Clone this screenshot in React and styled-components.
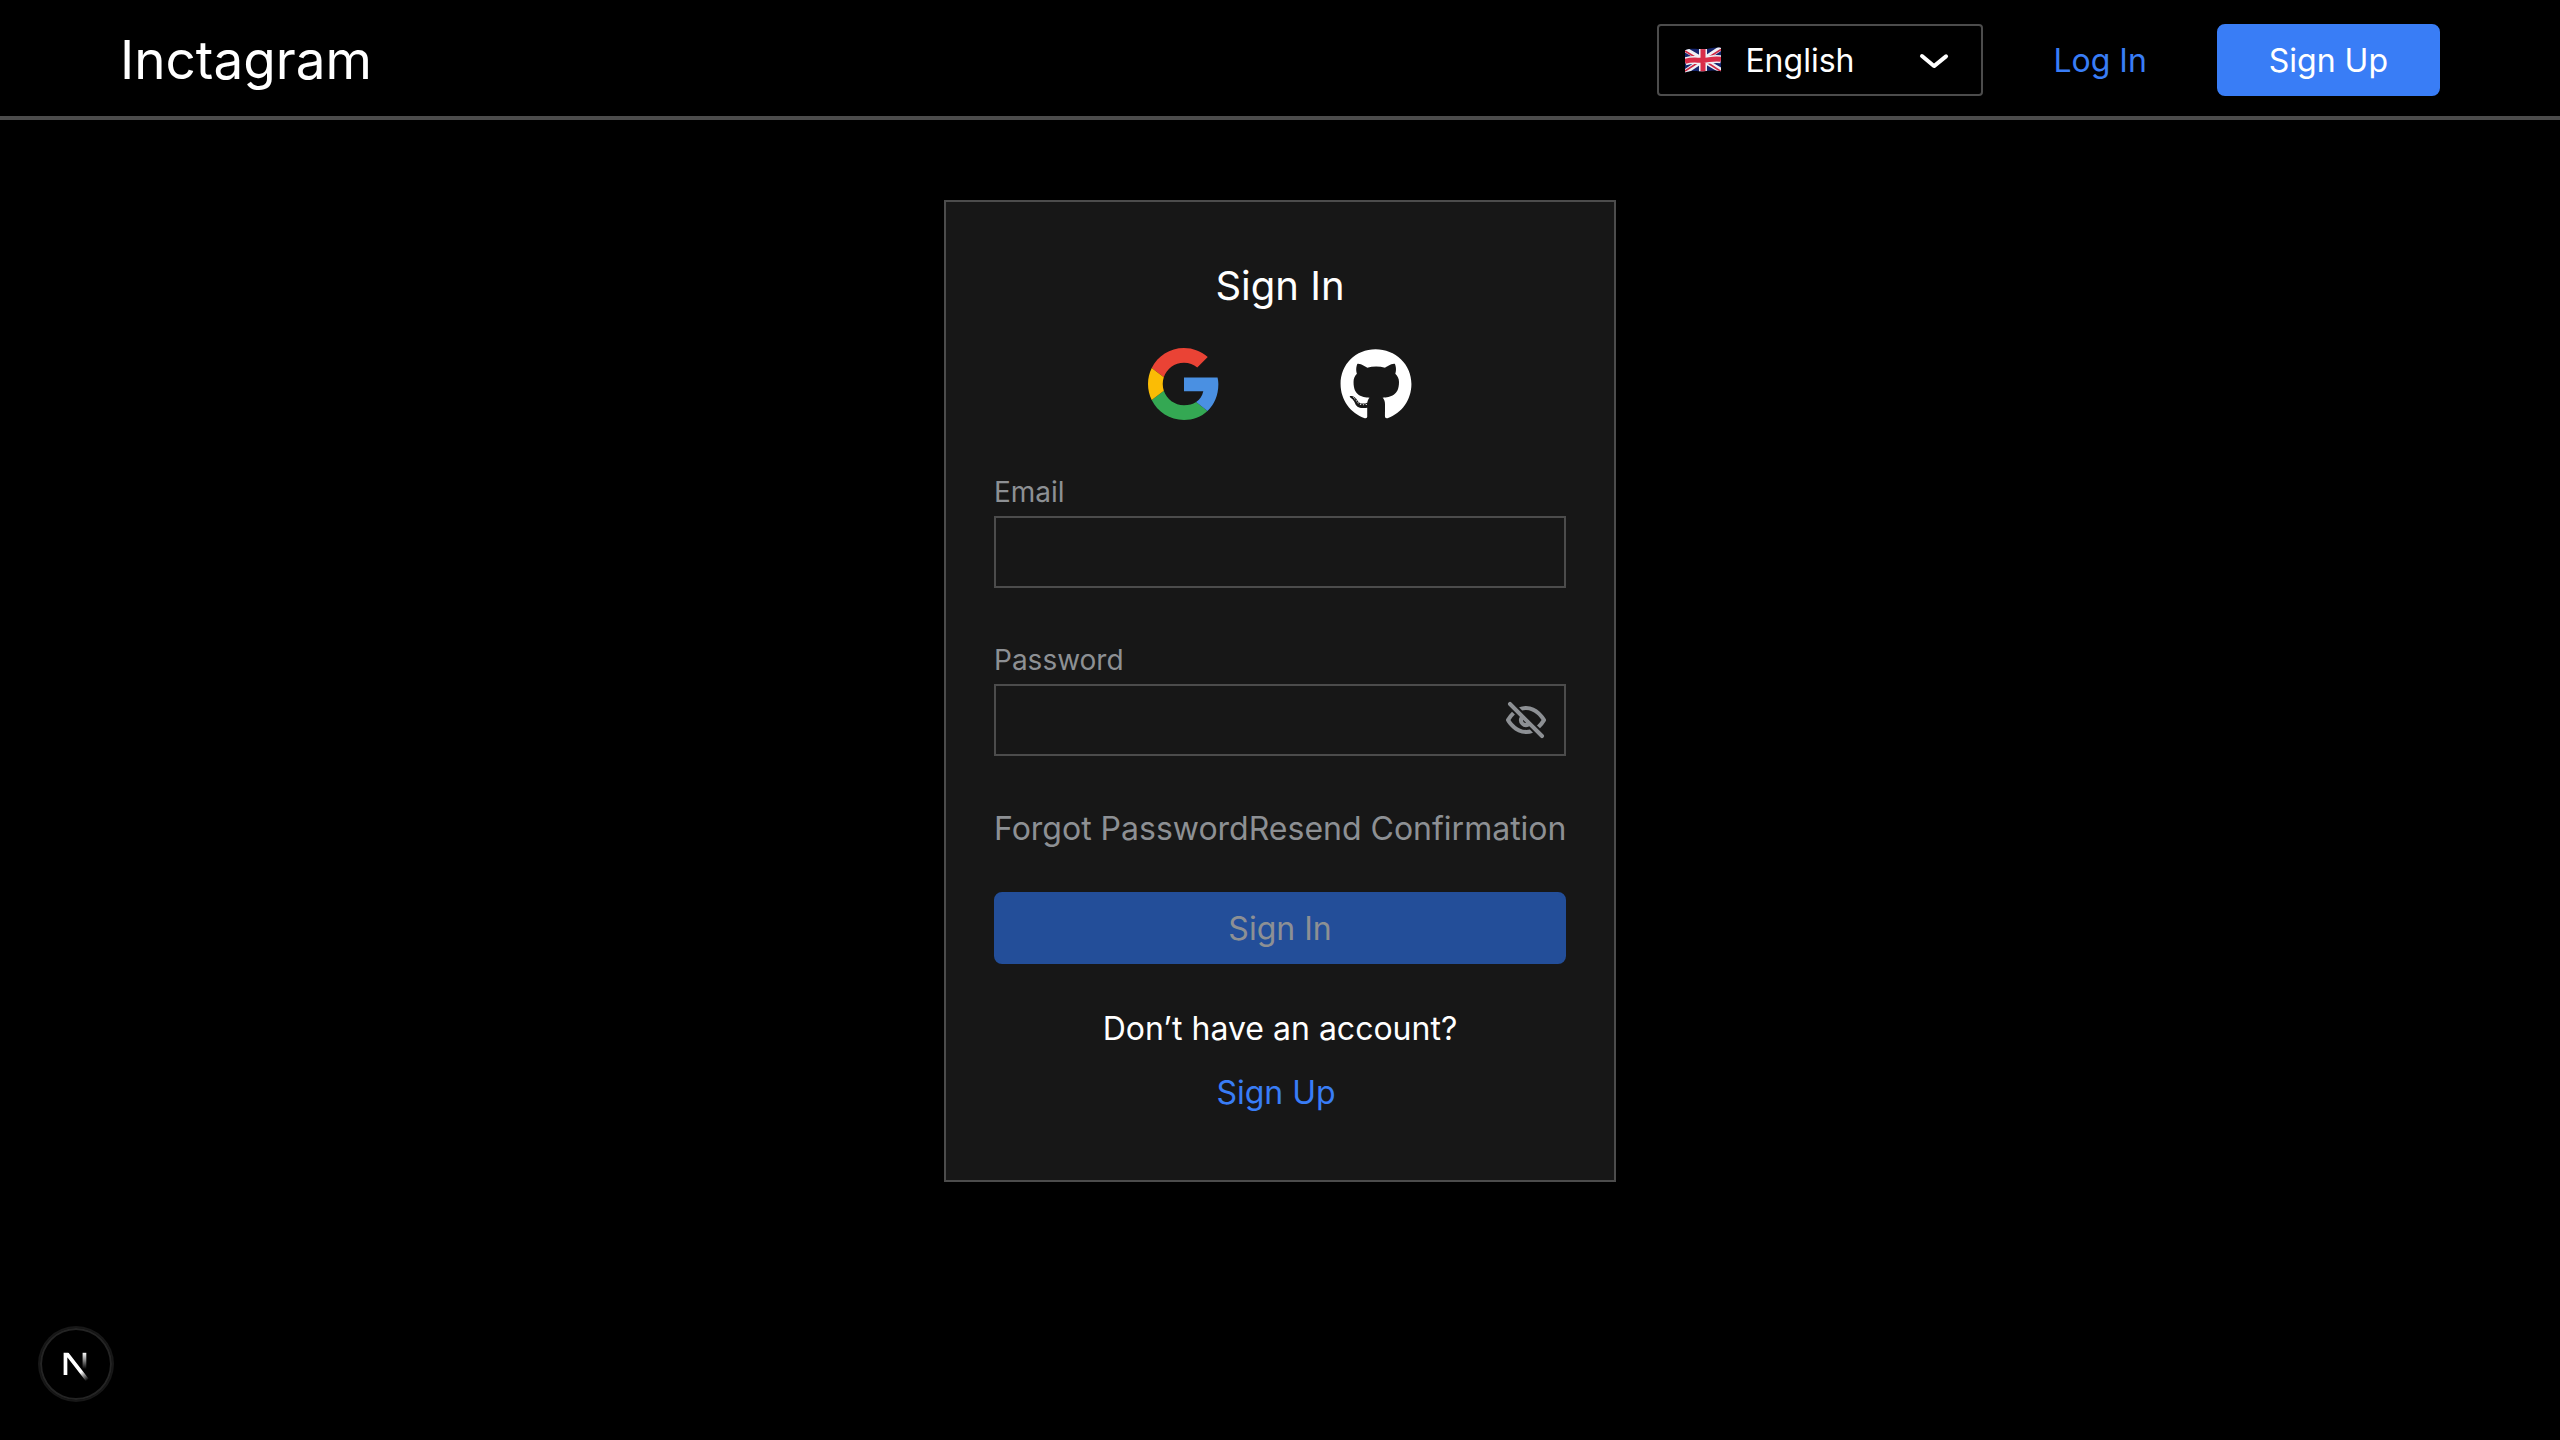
import React, { useState } from "react";
import styled, { createGlobalStyle, css } from "styled-components";
import { FaGithub } from "react-icons/fa";

const color = {
  page: "#000000",
  panel: "#171717",
  line: "#4c4c4c",
  text: "#ffffff",
  muted: "#8d9094",
  primary: "#397df6",
  primaryDisabled: "#234e99",
};

const GlobalStyle = createGlobalStyle`
  *, *::before, *::after { box-sizing: border-box; }
  body {
    margin: 0;
    background: ${color.page};
    color: ${color.text};
    font-family: Inter, "Liberation Sans", sans-serif;
    font-size: 32px;
    line-height: 50px;
  }
`;

const Header = styled.header`
  display: flex;
  align-items: center;
  justify-content: space-between;
  padding: 24px 120px 20px;
  border-bottom: 4px solid ${color.line};
`;

const Brand = styled.a`
  font-size: 53px;
  line-height: 72px;
  color: ${color.text};
  text-decoration: none;
`;

const Actions = styled.nav`
  display: flex;
  align-items: center;
  gap: 18px;
`;

const LanguageBox = styled.div`
  position: relative;
  display: flex;
  align-items: center;
`;

const LanguageSelect = styled.select`
  appearance: none;
  width: 326px;
  height: 72px;
  padding: 2px 72px 0 86px;
  border: 2px solid ${color.line};
  border-radius: 4px;
  background: ${color.page};
  color: ${color.text};
  font: inherit;
`;

const FlagIcon = styled.svg`
  position: absolute;
  left: 28px;
  width: 36px;
  height: 26px;
  pointer-events: none;
`;

const ChevronIcon = styled.svg`
  position: absolute;
  right: 25px;
  width: 48px;
  height: 48px;
  fill: ${color.text};
  pointer-events: none;
`;

const buttonBase = css`
  display: flex;
  align-items: center;
  justify-content: center;
  height: 72px;
  padding: 2px 50px 0;
  border: 2px solid transparent;
  border-radius: 8px;
  font: inherit;
  text-decoration: none;
`;

const LinkButton = styled.a`
  ${buttonBase}
  background: ${(p) => (p.$filled ? color.primary : "transparent")};
  color: ${(p) => (p.$filled ? color.text : color.primary)};
  border-color: ${(p) => (p.$filled ? color.primary : "transparent")};
`;

const SubmitButton = styled.button`
  ${buttonBase}
  width: 100%;
  margin-top: 38px;
  background: ${color.primary};
  color: ${color.text};

  &:disabled {
    background: ${color.primaryDisabled};
    border-color: ${color.primaryDisabled};
    color: ${color.muted};
  }
`;

const Main = styled.main`
  display: flex;
  justify-content: center;
  padding: 80px 24px;
`;

const Card = styled.form`
  display: flex;
  flex-direction: column;
  width: 672px;
  padding: 48px 48px 62px;
  border: 2px solid ${color.line};
  background: ${color.panel};
`;

const Title = styled.h1`
  margin: 0 0 26px;
  font-size: 40px;
  font-weight: 400;
  line-height: 72px;
  text-align: center;
`;

const Providers = styled.div`
  display: flex;
  justify-content: center;
  gap: 120px;
`;

const ProviderButton = styled.button`
  display: flex;
  padding: 0;
  border: 0;
  background: none;
  color: ${color.text};

  svg {
    width: 72px;
    height: 72px;
  }
`;

const Field = styled.div`
  display: flex;
  flex-direction: column;
  margin-top: 48px;
`;

const Label = styled.label`
  font-size: 28px;
  line-height: 48px;
  color: ${color.muted};
`;

const InputBox = styled.div`
  position: relative;
  display: flex;
  align-items: center;
`;

const Input = styled.input`
  width: 100%;
  height: 72px;
  padding: 0 ${(p) => (p.$withToggle ? "72px" : "24px")} 0 24px;
  border: 2px solid ${color.line};
  border-radius: 0;
  background: transparent;
  color: ${color.text};
  font: inherit;
`;

const ToggleButton = styled.button`
  position: absolute;
  right: 16px;
  display: flex;
  padding: 0;
  border: 0;
  background: none;

  svg {
    width: 48px;
    height: 48px;
    fill: ${color.muted};
  }
`;

const HelpLinks = styled.div`
  display: flex;
  justify-content: space-between;
  margin-top: 48px;
  white-space: nowrap;
`;

const HelpLink = styled.a`
  color: ${color.muted};
  text-decoration: none;
`;

const Prompt = styled.p`
  margin: 40px 0 14px;
  text-align: center;
`;

const SignUpRow = styled.div`
  padding-right: 8px;
  text-align: center;
`;

const SignUpLink = styled.a`
  color: ${color.primary};
  text-decoration: none;
`;

const DevBadge = styled.button`
  position: fixed;
  left: 40px;
  bottom: 40px;
  width: 72px;
  height: 72px;
  padding: 0;
  border: 0;
  border-radius: 50%;
  background: #000000;
  box-shadow: 0 0 0 2px #171717, inset 0 0 0 2px #242424;

  svg {
    display: block;
    width: 72px;
    height: 72px;
  }
`;

function UkFlag() {
  return (
    <FlagIcon viewBox="0 0 36 26" aria-hidden="true">
      <defs>
        <clipPath id="flag-cloth">
          <path d="M0 3.2C6 .8 11 2.2 18 2.2S29 -.4 36 .8V24.2C29 22.600 25 24.200 18 24.200S7 23 0 25.500Z" />
        </clipPath>
      </defs>
      <g clipPath="url(#flag-cloth)">
        <rect width="36" height="26" fill="#16266e" />
        <path d="M0 2.500 36 23.500M0 25 36 1" stroke="#f0f0f4" strokeWidth="5" />
        <path d="M0 4 15 13M20 14 36 24.500M0 24 14 15M21 12 36 2.500" stroke="#cf2945" strokeWidth="1.600" />
        <path d="M18 0V26M0 14.500C7 12 12 13.500 18 13.300S29 11 36 12.300" stroke="#f0f0f4" strokeWidth="8" fill="none" />
        <path d="M18 0V26M0 14.500C7 12 12 13.500 18 13.300S29 11 36 12.300" stroke="#d92c48" strokeWidth="5" fill="none" />
      </g>
    </FlagIcon>
  );
}

function GoogleLogo() {
  return (
    <svg viewBox="0 0 24 24" aria-hidden="true">
      <path fill="#EA4335" d="M5.2662 9.76453C6.19879 6.93863 8.85445 4.90909 12 4.90909C13.6909 4.90909 15.2182 5.50909 16.4182 6.49091L19.9091 3C17.7818 1.14545 15.0545 0 12 0C7.27007 0 3.19775 2.6983 1.23999 6.65002Z" />
      <path fill="#34A853" d="M16.0407 18.0126C14.9509 18.7163 13.5661 19.0909 12 19.0909C8.86649 19.0909 6.21912 17.0769 5.27698 14.2679L1.23746 17.335C3.19279 21.2936 7.265 24 12 24C14.9328 24 17.7353 22.9574 19.8342 20.9996Z" />
      <path fill="#4A90E2" d="M19.8342 20.9996C22.0292 18.9521 23.4545 15.9037 23.4545 12C23.4545 11.2909 23.3455 10.5273 23.1818 9.81818H12V14.4545H18.4364C18.1188 16.0136 17.2663 17.2212 16.0407 18.0126Z" />
      <path fill="#FBBC05" d="M5.27698 14.2679C5.03833 13.5563 4.90909 12.7938 4.90909 12C4.90909 11.2183 5.03444 10.4668 5.2662 9.76453L1.23999 6.65002C.436587 8.26043 0 10.0754 0 12C0 13.9195.444781 15.7302 1.23746 17.335Z" />
    </svg>
  );
}

function EyeOffIcon() {
  return (
    <svg viewBox="0 0 24 24" aria-hidden="true">
      <path d="M4.71 3.29a1 1 0 0 0-1.42 1.42l5.63 5.63a3.5 3.5 0 0 0 4.74 4.74l5.63 5.63a1 1 0 0 0 1.42 0 1 1 0 0 0 0-1.42zM12 13.5a1.5 1.5 0 0 1-1.5-1.500v-.07l1.560 1.560z" />
      <path d="M12.220 17c-4.300.1-7.120-3.590-8-5a13.700 13.700 0 0 1 2.240-2.720L5 7.870a15.890 15.890 0 0 0-2.870 3.630 1 1 0 0 0 0 1c.63 1.090 4 6.500 9.890 6.500h.25a9.480 9.480 0 0 0 3.230-.67l-1.580-1.580a7.740 7.740 0 0 1-1.700.25z" />
      <path d="M21.870 11.500c-.64-1.110-4.170-6.680-10.140-6.500a9.480 9.480 0 0 0-3.230.67l1.580 1.580a7.740 7.740 0 0 1 1.700-.25c4.290-.11 7.110 3.590 8 5a13.700 13.700 0 0 1-2.290 2.720L19 16.130a15.890 15.890 0 0 0 2.910-3.630 1 1 0 0 0-.04-1z" />
    </svg>
  );
}

function NextMark() {
  return (
    <svg viewBox="0 0 72 72" fill="none" aria-hidden="true">
      <defs>
        <linearGradient id="mark-diagonal" x1="9.956" y1="11.123" x2="15.478" y2="17.967" gradientUnits="userSpaceOnUse">
          <stop stopColor="#fff" />
          <stop offset="0.604" stopColor="#fff" stopOpacity="0" />
        </linearGradient>
        <linearGradient id="mark-stem" x1="11.822" y1="1.4" x2="11.791" y2="9.625" gradientUnits="userSpaceOnUse">
          <stop stopColor="#fff" />
          <stop offset="1" stopColor="#fff" stopOpacity="0" />
        </linearGradient>
        <clipPath id="mark-area">
          <rect x="0" y="1.5" width="16" height="15" />
        </clipPath>
      </defs>
      <g transform="translate(20.8 21.8) scale(2)">
        <path clipPath="url(#mark-area)" d="M13.3 15.2 2.34 1V12.6" stroke="url(#mark-diagonal)" strokeWidth="1.86" />
        <path d="M11.825 1.5V13.1" stroke="url(#mark-stem)" strokeWidth="1.86" />
      </g>
    </svg>
  );
}

export default function App() {
  const [email, setEmail] = useState("");
  const [password, setPassword] = useState("");
  const [visible, setVisible] = useState(false);

  return (
    <>
      <GlobalStyle />
      <Header>
        <Brand href="#home">Inctagram</Brand>
        <Actions>
          <LanguageBox>
            <LanguageSelect aria-label="Language" defaultValue="en">
              <option value="en">English</option>
            </LanguageSelect>
            <UkFlag />
            <ChevronIcon viewBox="0 0 24 24" aria-hidden="true">
              <path d="M12 16a1 1 0 0 1-.64-.23l-6-5a1 1 0 1 1 1.280-1.540L12 13.710l5.360-4.320a1 1 0 0 1 1.410.15 1 1 0 0 1-.14 1.460l-6 4.830A1 1 0 0 1 12 16z" />
            </ChevronIcon>
          </LanguageBox>
          <LinkButton href="#login">Log In</LinkButton>
          <LinkButton href="#signup" $filled>Sign Up</LinkButton>
        </Actions>
      </Header>
      <Main>
        <Card onSubmit={(e) => e.preventDefault()}>
          <Title>Sign In</Title>
          <Providers>
            <ProviderButton type="button" aria-label="Google">
              <GoogleLogo />
            </ProviderButton>
            <ProviderButton type="button" aria-label="GitHub">
              <FaGithub viewBox="-4 0 504 504" />
            </ProviderButton>
          </Providers>
          <Field>
            <Label htmlFor="email">Email</Label>
            <Input id="email" type="email" value={email} onChange={(e) => setEmail(e.target.value)} />
          </Field>
          <Field>
            <Label htmlFor="password">Password</Label>
            <InputBox>
              <Input
                id="password"
                type={visible ? "text" : "password"}
                value={password}
                onChange={(e) => setPassword(e.target.value)}
                $withToggle
              />
              <ToggleButton type="button" aria-label="Show password" onClick={() => setVisible(!visible)}>
                <EyeOffIcon />
              </ToggleButton>
            </InputBox>
          </Field>
          <HelpLinks>
            <HelpLink href="#forgot">Forgot Password</HelpLink>
            <HelpLink href="#resend">Resend Confirmation</HelpLink>
          </HelpLinks>
          <SubmitButton type="submit" disabled={!email || !password}>Sign In</SubmitButton>
          <Prompt>Don’t have an account?</Prompt>
          <SignUpRow>
            <SignUpLink href="#signup">Sign Up</SignUpLink>
          </SignUpRow>
        </Card>
      </Main>
      <DevBadge type="button" aria-label="Developer tools">
        <NextMark />
      </DevBadge>
    </>
  );
}
